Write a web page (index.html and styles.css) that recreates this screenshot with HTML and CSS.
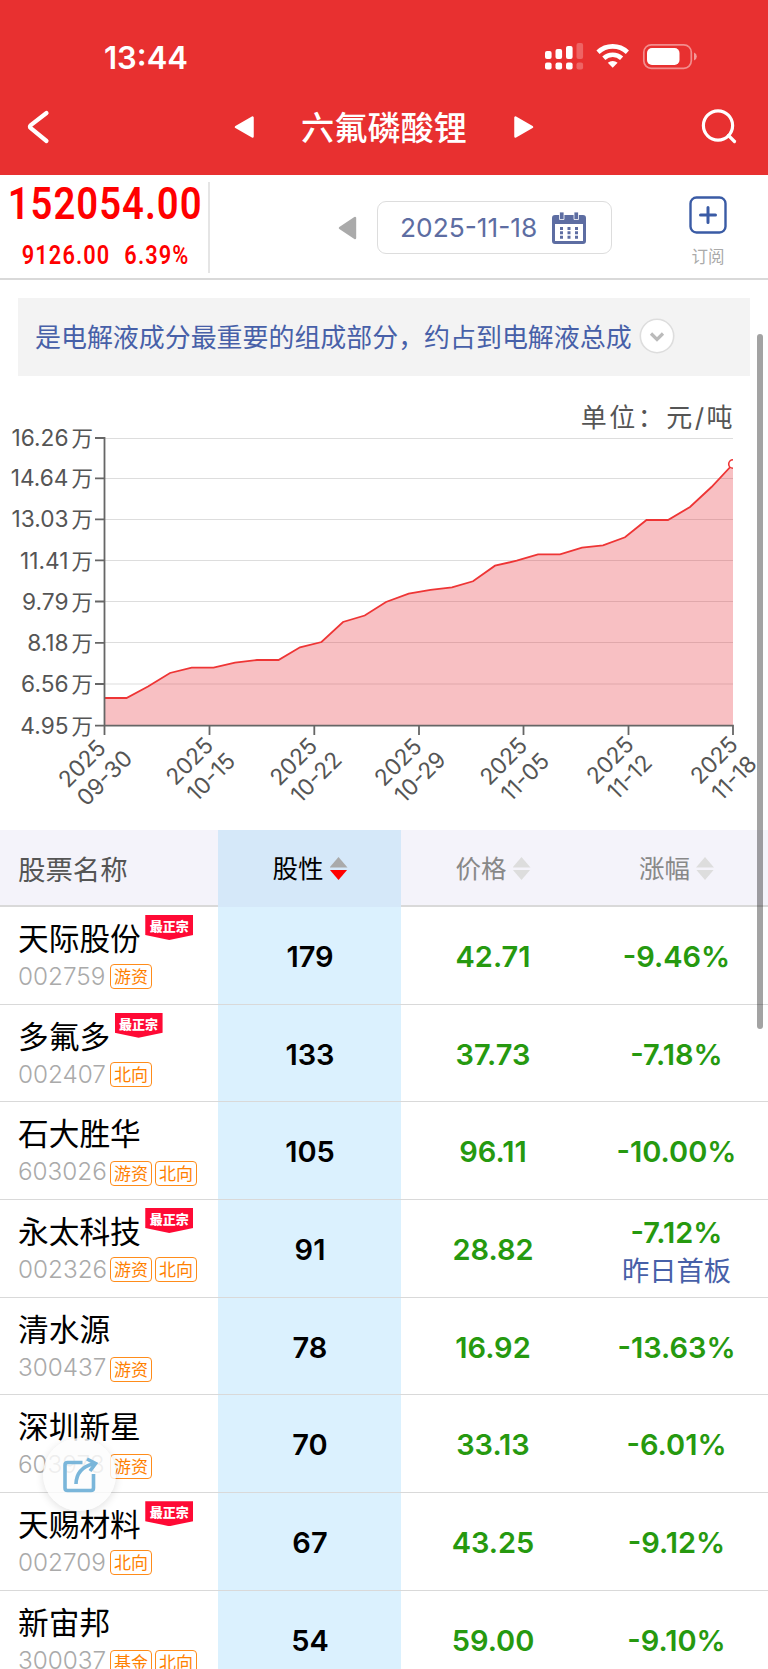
FILE: index.html
```html
<!DOCTYPE html>
<html lang="zh-CN">
<head>
    <meta charset="UTF-8">
    <meta name="viewport" content="width=device-width, initial-scale=1.0">
    <title>六氟磷酸锂</title>
    <link rel="stylesheet" href="styles.css">
</head>
<body>

<header class="header">
    <div class="status-bar">
        <span class="time">13:44</span>
        <svg class="status-icons" width="154" height="28" viewBox="0 0 154 28" fill="#fff">
            <rect x="1" y="9" width="6.6" height="8" rx="2"/>
            <rect x="11.5" y="7" width="6.6" height="10" rx="2"/>
            <rect x="22" y="4" width="6.6" height="13" rx="2"/>
            <rect x="32.5" y="1" width="6.6" height="16" rx="2" opacity=".25"/>
            <rect x="1" y="20.5" width="6.6" height="7" rx="2"/>
            <rect x="11.5" y="20.5" width="6.6" height="7" rx="2"/>
            <rect x="22" y="20.5" width="6.6" height="7" rx="2"/>
            <rect x="32.5" y="20.5" width="6.6" height="7" rx="2" opacity=".25"/>
            <g fill="none" stroke="#fff" stroke-width="4.6">
                <path d="M54 10.2a21.5 21.5 0 0 1 29.4 0"/>
                <path d="M59.8 16.2a13.3 13.3 0 0 1 17.8 0"/>
            </g>
            <path d="M63.8 20.8a7.6 7.6 0 0 1 9.8 0l-4.9 5z"/>
            <rect x="99.8" y="2.8" width="47.5" height="23.5" rx="7.5" fill="none" stroke="#fff" stroke-width="1.7" opacity=".45"/>
            <rect x="103" y="6" width="32.5" height="17" rx="5"/>
            <path d="M150 10.5q2.8 1.2 2.8 4t-2.8 4z" opacity=".5"/>
        </svg>
    </div>
    <div class="nav-bar">
        <svg class="back" width="24" height="36" viewBox="0 0 24 36"><path d="M20.5 4L4.8 16.2q-1.8 1.5 0 3L20.5 32" fill="none" stroke="#fff" stroke-width="4.2" stroke-linecap="round"/></svg>
        <div class="title-group">
            <svg width="20" height="24" viewBox="0 0 20 24"><path d="M2 12L18.5 2.5v19z" fill="#fff" stroke="#fff" stroke-width="2.5" stroke-linejoin="round"/></svg>
            <h1>六氟磷酸锂</h1>
            <svg width="20" height="24" viewBox="0 0 20 24"><path d="M18 12L1.5 2.5v19z" fill="#fff" stroke="#fff" stroke-width="2.5" stroke-linejoin="round"/></svg>
        </div>
        <svg class="search" width="36" height="36" viewBox="0 0 36 36" fill="none" stroke="#fff" stroke-width="3.2" stroke-linecap="round"><circle cx="17" cy="16.5" r="14.6"/><path d="M27.5 26.5l6 6"/></svg>
    </div>
</header>

<section class="quote-bar">
    <div class="quote">
        <div class="price">152054.00</div>
        <div class="diff"><span>9126.00</span><span>6.39%</span></div>
    </div>
    <div class="date-area">
        <svg width="19" height="24" viewBox="0 0 19 24"><path d="M2 12L17 2v20z" fill="#aaa" stroke="#aaa" stroke-width="2.4" stroke-linejoin="round"/></svg>
        <div class="date-box">
            <span>2025-11-18</span>
            <svg width="34" height="32" viewBox="0 0 34 32" fill="#5d6da2">
                <path d="M3 3h28q3 0 3 3v23q0 3-3 3H3q-3 0-3-3V6q0-3 3-3zM3 12v17h28V12z" fill-rule="evenodd"/>
                <path d="M7.5 0h4.5v7.5H7.5zM22 0h4.5v7.5H22z" stroke="#fff" stroke-width=".8"/>
                <path d="M8 15h3v3H8zM15.5 15h3v3h-3zM23 15h3v3h-3zM8 19.3h3v3H8zM15.5 19.3h3v3h-3zM23 19.3h3v3h-3zM8 23.7h3v3H8zM15.5 23.7h3v3h-3zM23 23.7h3v3h-3z"/>
            </svg>
        </div>
    </div>
    <div class="subscribe">
        <svg width="38" height="38" viewBox="0 0 38 38" fill="none" stroke="#3a5ba5" stroke-width="2.4"><rect x="1.5" y="1.5" width="35" height="35" rx="6"/><path d="M19 11.5v15M11.5 19h15" stroke-width="3" stroke-linecap="round"/></svg>
        <span>订阅</span>
    </div>
</section>

<section class="notice">
    <p>是电解液成分最重要的组成部分，约占到电解液总成</p>
    <svg width="36" height="36" viewBox="0 0 36 36"><circle cx="18" cy="18" r="16.7" fill="#fff" stroke="#ddd" stroke-width="1.6"/><path d="M12 15.5l6 6 6-6" fill="none" stroke="#bbb" stroke-width="3.2"/></svg>
</section>

<section class="chart">
    <svg width="768" height="454" viewBox="0 376 768 454">
        <defs><clipPath id="plot"><rect x="104" y="430" width="629" height="296"/></clipPath></defs>
        <text class="unit" x="735" y="427" text-anchor="end">单位：元/吨</text>
        <path class="grid" d="M105 438.5H733M105 478.5H733M105 519.5H733M105 560.5H733M105 601.5H733M105 642.5H733M105 684H733"/>
        <g clip-path="url(#plot)">
            <path class="area" d="M104.5 698L126.5 698 148 686.5 170 673 191.7 667.6 213.5 667.6 235 662.7 257 660 278.5 660 300 647.3 321.5 642 343 622 364.7 615.5 386 602 408.7 593.7 430.5 589.8 452 587.4 473 581.3 495 565.7 516.7 560.7 538 554.3 560 554.3 582 547.7 603 545.3 625 537.3 646.5 520 668 520 690 507 711.5 487 733 464V725H104.5z"/>
            <path class="line" d="M104.5 698L126.5 698 148 686.5 170 673 191.7 667.6 213.5 667.6 235 662.7 257 660 278.5 660 300 647.3 321.5 642 343 622 364.7 615.5 386 602 408.7 593.7 430.5 589.8 452 587.4 473 581.3 495 565.7 516.7 560.7 538 554.3 560 554.3 582 547.7 603 545.3 625 537.3 646.5 520 668 520 690 507 711.5 487 733 464"/>
            <circle class="point" cx="733" cy="464" r="4.3"/>
        </g>
        <path class="axis" d="M95 438H104.5V735M95 478.3h9M95 519.3h9M95 560.3h9M95 601.5h9M95 642.8h9M95 684h9M95 725.7H733V735M209.5 726v9M314.3 726v9M419 726v9M523.5 726v9M628.5 726v9"/>
        <g class="labels" text-anchor="end">
            <text x="68.5" y="446">16.26</text><text class="wan" x="93" y="446">万</text>
            <text x="68.5" y="486">14.64</text><text class="wan" x="93" y="486">万</text>
            <text x="68.5" y="527">13.03</text><text class="wan" x="93" y="527">万</text>
            <text x="68.5" y="568.5">11.41</text><text class="wan" x="93" y="568.5">万</text>
            <text x="68.5" y="609.5">9.79</text><text class="wan" x="93" y="609.5">万</text>
            <text x="68.5" y="651">8.18</text><text class="wan" x="93" y="651">万</text>
            <text x="68.5" y="692">6.56</text><text class="wan" x="93" y="692">万</text>
            <text x="68.5" y="733.5">4.95</text><text class="wan" x="93" y="733.5">万</text>
        </g>
        <g class="labels" text-anchor="middle">
            <text transform="translate(82 763.5) rotate(-45)" y="8">2025</text><text transform="translate(104.5 778) rotate(-45)" y="8">09-30</text>
            <text transform="translate(189.5 761) rotate(-45)" y="8">2025</text><text transform="translate(211 777) rotate(-45)" y="8">10-15</text>
            <text transform="translate(293.5 761.5) rotate(-45)" y="8">2025</text><text transform="translate(316 777) rotate(-45)" y="8">10-22</text>
            <text transform="translate(398 762) rotate(-45)" y="8">2025</text><text transform="translate(420 777) rotate(-45)" y="8">10-29</text>
            <text transform="translate(503.5 761) rotate(-45)" y="8">2025</text><text transform="translate(525 777) rotate(-45)" y="8">11-05</text>
            <text transform="translate(610 760) rotate(-45)" y="8">2025</text><text transform="translate(629.5 777) rotate(-45)" y="8">11-12</text>
            <text transform="translate(714 760) rotate(-45)" y="8">2025</text><text transform="translate(734 778) rotate(-45)" y="8">11-18</text>
        </g>
    </svg>
</section>

<section class="stocks">
    <div class="row head">
        <div class="stock">股票名称</div>
        <div class="cell active">股性<i class="sort desc"></i></div>
        <div class="cell">价格<i class="sort"></i></div>
        <div class="cell">涨幅<i class="sort"></i></div>
    </div>
    <div class="row">
        <div class="stock">
            <div class="name">天际股份<span class="badge">最正宗</span></div>
            <div class="info"><span class="code">002759</span><span class="tag">游资</span></div>
        </div>
        <div class="cell active">179</div>
        <div class="cell">42.71</div>
        <div class="cell">-9.46%</div>
    </div>
    <div class="row">
        <div class="stock">
            <div class="name">多氟多<span class="badge">最正宗</span></div>
            <div class="info"><span class="code">002407</span><span class="tag">北向</span></div>
        </div>
        <div class="cell active">133</div>
        <div class="cell">37.73</div>
        <div class="cell">-7.18%</div>
    </div>
    <div class="row">
        <div class="stock">
            <div class="name">石大胜华</div>
            <div class="info low"><span class="code">603026</span><span class="tag">游资</span><span class="tag">北向</span></div>
        </div>
        <div class="cell active">105</div>
        <div class="cell">96.11</div>
        <div class="cell">-10.00%</div>
    </div>
    <div class="row">
        <div class="stock">
            <div class="name">永太科技<span class="badge">最正宗</span></div>
            <div class="info"><span class="code">002326</span><span class="tag">游资</span><span class="tag">北向</span></div>
        </div>
        <div class="cell active">91</div>
        <div class="cell">28.82</div>
        <div class="cell double">-7.12%<span class="board">昨日首板</span></div>
    </div>
    <div class="row">
        <div class="stock">
            <div class="name">清水源</div>
            <div class="info low"><span class="code">300437</span><span class="tag">游资</span></div>
        </div>
        <div class="cell active">78</div>
        <div class="cell">16.92</div>
        <div class="cell">-13.63%</div>
    </div>
    <div class="row">
        <div class="stock">
            <div class="name">深圳新星</div>
            <div class="info low"><span class="code">603978</span><span class="tag">游资</span></div>
        </div>
        <div class="cell active">70</div>
        <div class="cell">33.13</div>
        <div class="cell">-6.01%</div>
    </div>
    <div class="row">
        <div class="stock">
            <div class="name">天赐材料<span class="badge">最正宗</span></div>
            <div class="info"><span class="code">002709</span><span class="tag">北向</span></div>
        </div>
        <div class="cell active">67</div>
        <div class="cell">43.25</div>
        <div class="cell">-9.12%</div>
    </div>
    <div class="row">
        <div class="stock">
            <div class="name">新宙邦</div>
            <div class="info low"><span class="code">300037</span><span class="tag">基金</span><span class="tag">北向</span></div>
        </div>
        <div class="cell active">54</div>
        <div class="cell">59.00</div>
        <div class="cell">-9.10%</div>
    </div>
</section>

<div class="share">
    <svg width="36" height="38" viewBox="0 0 36 38" fill="none" stroke="#7ab6da" stroke-width="3.6">
        <path d="M20.5 6.5H5.5Q3 6.5 3 9V32Q3 34.5 5.5 34.5H29Q31.5 34.5 31.5 32V18"/>
        <path d="M14 28Q14.5 12 31 8"/>
        <path d="M25 3L33.5 7.5 28 15"/>
    </svg>
</div>
<div class="scrollbar"></div>

</body>
</html>
```
FILE: styles.css
```css
/* General Styles */
* {
    box-sizing: border-box;
}

body {
    position: relative;
    width: 768px;
    height: 1669px;
    margin: 0;
    overflow: hidden;
    background: #fff;
    color: #000;
    font-family: Inter, "Noto Sans CJK SC", sans-serif;
}

svg {
    display: block;
    flex: none;
}

/* Header */
.header {
    height: 175px;
    background: #e83030;
    color: #fff;
}

.status-bar {
    display: flex;
    justify-content: space-between;
    height: 79px;
    padding: 38px 70px 0 104px;
}

.time {
    font-size: 31px;
    font-weight: 600;
    line-height: 39px;
}

.status-icons {
    margin-top: 4px;
}

.nav-bar {
    display: flex;
    align-items: center;
    justify-content: space-between;
    height: 96px;
    padding: 0 31px 0 26px;
}

.title-group {
    display: flex;
    align-items: center;
    gap: 47px;
    margin-left: 17px;
}

.title-group h1 {
    margin: 2px 0 0;
    font-size: 33.2px;
    font-weight: 500;
    line-height: 40px;
}

/* Quote */
.quote-bar {
    display: flex;
    height: 105px;
    border-bottom: 2px solid #d9d9d9;
}

.quote {
    width: 210px;
    height: 91px;
    margin-top: 7px;
    border-right: 2px solid #e5e5e5;
    color: #f00;
    font-family: Roboto, sans-serif;
    font-weight: 600;
}

.price {
    width: 240px;
    padding-left: 9px;
    font-size: 45px;
    line-height: 44px;
    letter-spacing: 1.2px;
    transform: scaleX(0.85);
    transform-origin: left;
}

.diff {
    display: flex;
    gap: 16px;
    width: 240px;
    padding: 15px 0 0 25px;
    font-size: 25px;
    line-height: 30px;
    letter-spacing: 1.3px;
    transform: scaleX(0.87);
    transform-origin: left;
}

.date-area {
    display: flex;
    align-items: center;
    gap: 20px;
    width: 402px;
    padding: 2px 0 0 128px;
}

.date-box {
    display: flex;
    align-items: center;
    justify-content: space-between;
    width: 236px;
    height: 53px;
    padding: 0 25px 0 22px;
    border: 1px solid #ddd;
    border-radius: 9px;
    color: #5d6da2;
    font-size: 26.3px;
}

.subscribe {
    display: flex;
    flex: 1;
    flex-direction: column;
    align-items: center;
    gap: 11px;
    padding: 21px 0 0 36px;
    color: #aaa;
    font-size: 16.5px;
    line-height: 24px;
}

/* Notice */
.notice {
    display: flex;
    align-items: center;
    gap: 7px;
    height: 78px;
    margin: 18px 18px 0;
    padding: 0 0 3px 17px;
    background: #f3f3f3;
    color: #4760a8;
    font-size: 25.95px;
}

.notice p {
    margin: 0;
}

/* Chart */
.chart {
    height: 454px;
}

.unit {
    fill: #555;
    font-size: 26px;
    letter-spacing: 2.5px;
}

.grid {
    stroke: #ddd;
    stroke-width: 1.2;
}

.area {
    fill: #e83038;
    fill-opacity: 0.3;
}

.line {
    fill: none;
    stroke: #ee3535;
    stroke-width: 1.8;
}

.point {
    fill: #fff;
    stroke: #ee3535;
    stroke-width: 1.6;
}

.axis {
    fill: none;
    stroke: #666;
    stroke-width: 1.8;
}

.labels {
    fill: #555;
    font-size: 22.7px;
}

.wan {
    font-size: 21.5px;
}

/* Stock table */
.row {
    display: grid;
    grid-template-columns: 218px 183px 183px 184px;
    height: 97.7px;
    border-bottom: 1px solid #d9d9d9;
}

.head {
    height: 77px;
    border-bottom-width: 2px;
    background: #f4f3fa;
    color: #888;
}

.stock {
    padding: 7px 0 0 18px;
}

.head .stock {
    padding-top: 0;
    color: #555;
    font-size: 27.4px;
    line-height: 80px;
}

.name {
    display: flex;
    font-size: 30.7px;
    line-height: 50px;
    height: 49px;
}

.badge {
    width: 48px;
    height: 25px;
    margin: 1px 0 0 4.5px;
    background: #ff0a35;
    clip-path: polygon(0 0, 100% 0, 100% 80%, 50% 100%, 0 80%);
    color: #fff;
    font-size: 13px;
    font-weight: 900;
    line-height: 22px;
    text-align: center;
}

.info {
    display: flex;
    align-items: flex-start;
}

.code {
    width: 92px;
    color: #aaa;
    font-size: 24.3px;
    font-weight: 300;
    line-height: 26px;
}

.tag {
    width: 42px;
    height: 25px;
    margin: 1px 3px 0 0;
    border: 1px solid #ff8c1a;
    border-radius: 4px;
    color: #ff8000;
    font-size: 17px;
    line-height: 24px;
    text-align: center;
}

.low .tag {
    margin-top: 3px;
}

.cell {
    display: flex;
    align-items: center;
    justify-content: center;
    padding: 2px 0 0 1px;
    color: #26990f;
    font-size: 29px;
    font-weight: 600;
}

.cell.active {
    background: #dbf1fe;
    color: #000;
}

.head .cell {
    align-items: flex-start;
    padding-top: 0;
    color: #888;
    font-size: 25.5px;
    font-weight: 400;
    line-height: 77px;
}

.head .cell.active {
    background: #d5e8f9;
    color: #000;
}

.double {
    flex-direction: column;
    padding-top: 7px;
    line-height: 39px;
}

.board {
    color: #4760a8;
    font-size: 27.3px;
    font-weight: 400;
}

.sort {
    display: flex;
    flex-direction: column;
    gap: 2px;
    margin: 27px 0 0 6px;
}

.sort::before,
.sort::after {
    content: "";
    width: 18px;
    height: 10.5px;
    background: #ddd;
    clip-path: polygon(50% 0, 100% 100%, 0 100%);
}

.sort::after {
    clip-path: polygon(0 0, 100% 0, 50% 100%);
}

.sort.desc::before {
    background: #aaa;
}

.sort.desc::after {
    background: #f00;
}

/* Floating items */
.share {
    position: absolute;
    left: 43px;
    top: 1438px;
    display: flex;
    align-items: center;
    justify-content: center;
    width: 73px;
    height: 73px;
    border-radius: 50%;
    background: rgba(252, 252, 252, 0.82);
    box-shadow: 0 2px 9px rgba(0, 0, 0, 0.12);
}

.scrollbar {
    position: absolute;
    left: 757px;
    top: 334px;
    width: 6px;
    height: 695px;
    border-radius: 3px;
    background: rgba(0, 0, 0, 0.36);
}
```
